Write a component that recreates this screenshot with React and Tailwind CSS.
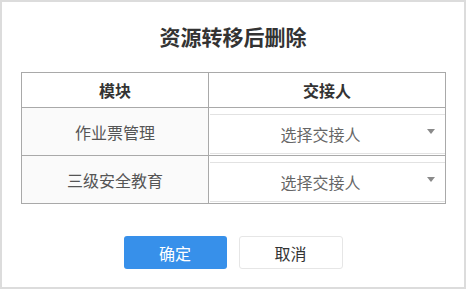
export default function App() {
  const font = { fontFamily: '"Noto Sans CJK SC", "Noto Sans", sans-serif' };
  const rows = ["作业票管理", "三级安全教育"];
  return (
    <div style={font} className="w-[466px] h-[289px] border-2 border-[#dcdcdc] bg-white flex flex-col items-center">
      <div className="pt-[20px] h-[48px] text-[21px] leading-[28px] font-bold text-[#333]">资源转移后删除</div>
      <div className="mt-[22px] ml-[1px] w-[425px] border border-[#a9a9a9]">
        <div className="grid grid-cols-[187px_1fr] h-[34px] bg-white">
          <div className="border-r border-[#a9a9a9] flex items-center justify-center text-[16px] font-bold text-[#333]">模块</div>
          <div className="flex items-center justify-center text-[16px] font-bold text-[#333]">交接人</div>
        </div>
        {rows.map((r) => (
          <div key={r} className="grid grid-cols-[187px_1fr] h-[48px] border-t border-[#a9a9a9]">
            <div className="border-r border-[#a9a9a9] bg-[#fafafa] flex items-center justify-center text-[16px] text-[#555]">{r}</div>
            <div className="bg-white pt-[6px] pl-[1px] pb-[1px]">
              <div className="relative h-full border-y border-[#e2e2e2] bg-white flex items-center justify-center pr-[14px] text-[16px] text-[#666]">
                选择交接人
                <span className="absolute right-[10px] top-[14px] w-0 h-0 border-l-[4px] border-r-[4px] border-t-[5px] border-l-transparent border-r-transparent border-t-[#8a8a8a]"></span>
              </div>
            </div>
          </div>
        ))}
      </div>
      <div className="mt-[32px] flex gap-[12px]">
        <button className="w-[103px] h-[33px] rounded-[3px] bg-[#3790ea] text-white text-[16px] flex items-center justify-center">确定</button>
        <button className="w-[104px] h-[33px] rounded-[3px] bg-white border border-[#e6e6e6] text-[#333] text-[16px] flex items-center justify-center">取消</button>
      </div>
    </div>
  );
}
